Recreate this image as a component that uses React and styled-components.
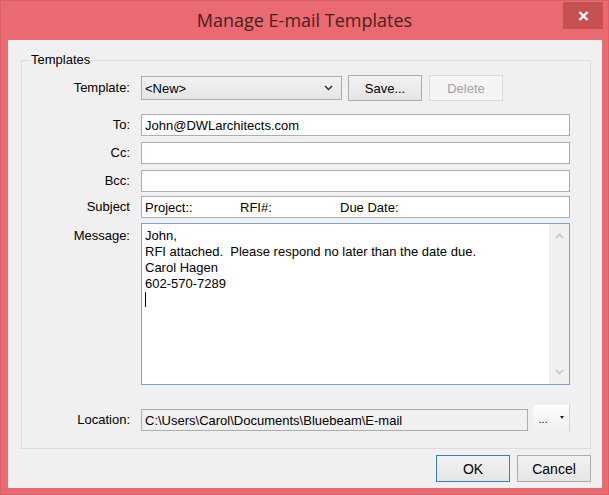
import React from "react";
import styled, { createGlobalStyle } from "styled-components";

const GlobalStyle = createGlobalStyle`
  html, body {
    margin: 0;
    padding: 0;
    background: #e96a71;
  }

  body {
    font-family: "Liberation Sans", Arial, sans-serif;
    font-size: 13px;
    color: #000;
  }
`;

const Window = styled.div`
  width: 609px;
  height: 495px;
  box-sizing: border-box;
  background: #e96a71;
  box-shadow: inset 0 0 0 1px #d8606a;
  display: flex;
  flex-direction: column;
`;

const TitleBar = styled.div`
  height: 40px;
  flex: none;
  display: grid;
  grid-template-columns: 1fr auto 1fr;
`;

const Title = styled.div`
  grid-column: 2;
  align-self: center;
  margin-top: -1px;
  font-family: "Open Sans", "Noto Sans", sans-serif;
  font-size: 18px;
  color: #4a1f23;
  white-space: nowrap;
`;

const CloseButton = styled.div`
  grid-column: 3;
  justify-self: end;
  align-self: start;
  width: 40px;
  height: 27px;
  margin: 2px 6px 0 0;
  background: #c75050;
  display: flex;
  align-items: center;
  justify-content: center;
`;

const Client = styled.div`
  flex: 1;
  margin: 0 7px 7px 8px;
  background: #f0f0f0;
  display: flex;
  flex-direction: column;
`;

const Group = styled.div`
  position: relative;
  margin: 20px 11px 0 13px;
  border: 1px solid #dcdcdc;
  padding: 14px 20px 17px 0;
  display: flex;
  flex-direction: column;
`;

// sits over the group border, like a fieldset legend
const Legend = styled.div`
  position: absolute;
  top: -9px;
  left: 7px;
  padding: 0 2px;
  line-height: 15px;
  background: #f0f0f0;
`;

const Row = styled.div`
  display: grid;
  grid-template-columns: 108px 1fr;
  column-gap: 11px;
  align-items: ${(p) => p.$align || "center"};
  margin-top: ${(p) => p.$top || 0}px;
`;

const Label = styled.div`
  text-align: right;
  white-space: nowrap;
  line-height: 22px;
  padding-top: ${(p) => p.$pad || 0}px;
`;

const Field = styled.div`
  height: 22px;
  box-sizing: border-box;
  border: 1px solid #abadb3;
  background: ${(p) => (p.$readOnly ? "#f0f0f0" : "#fff")};
  padding: 0 3px;
  display: flex;
  align-items: center;
  white-space: nowrap;
  overflow: hidden;
  flex: 1;
`;

const Controls = styled.div`
  display: flex;
  align-items: ${(p) => p.$align || "center"};
  gap: ${(p) => p.$gap || 7}px;
`;

const Combo = styled.div`
  width: 201px;
  height: 24px;
  box-sizing: border-box;
  border: 1px solid #acacac;
  background: linear-gradient(#f2f2f2, #e5e5e5);
  padding: 0 8px 0 3px;
  display: flex;
  align-items: center;
  justify-content: space-between;
`;

const Button = styled.div`
  width: ${(p) => p.$width || 74}px;
  height: ${(p) => p.$height || 26}px;
  box-sizing: border-box;
  border: 1px solid
    ${(p) => (p.$default ? "#3c7fb1" : p.$disabled ? "#d9d9d9" : "#acacac")};
  background: ${(p) =>
    p.$disabled ? "#f4f4f4" : "linear-gradient(#f2f2f2, #e5e5e5)"};
  color: ${(p) => (p.$disabled ? "#a3a3a3" : "#000")};
  font-size: ${(p) => p.$size || 13}px;
  display: flex;
  align-items: center;
  justify-content: center;
  margin-left: ${(p) => p.$left || 0}px;
`;

const SubjectPart = styled.span`
  display: inline-block;
  width: ${(p) => p.$width}px;
`;

const MessageBox = styled.div`
  height: 162px;
  box-sizing: border-box;
  border: 1px solid #7da2ce;
  background: #fff;
  display: grid;
  grid-template-columns: 1fr 20px;
`;

const MessageText = styled.div`
  padding: 4px 3px;
  line-height: 16px;
`;

const Caret = styled.span`
  display: inline-block;
  width: 0;
  height: 15px;
  border-left: 1px solid #000;
  vertical-align: top;
`;

const ScrollBar = styled.div`
  background: #f0f0f0;
  display: flex;
  flex-direction: column;
  justify-content: space-between;
  align-items: center;
  padding: 9px 0 9px;
`;

const MoreButton = styled.div`
  width: 37px;
  height: 26px;
  box-sizing: border-box;
  background: linear-gradient(#fdfdfd, #f0f0f0);
  border-right: 1px solid #d2d2d2;
  display: flex;
  align-items: flex-end;
  justify-content: center;
  gap: 12px;
  padding-bottom: 6px;
  font-size: 11px;
  line-height: 11px;
`;

const Caret3 = styled.span`
  width: 0;
  height: 0;
  border-left: 2.5px solid transparent;
  border-right: 2.5px solid transparent;
  border-top: 3px solid #222;
  margin-bottom: 6px;
`;

const Footer = styled.div`
  display: flex;
  justify-content: flex-end;
  gap: 7px;
  margin: 6px 11px 0 0;
`;

function Chevron({ up, color = "#333", width = 9 }) {
  return (
    <svg width={width} height="6" viewBox="0 0 9 6">
      <path
        d={up ? "M1 5 4.5 1.5 8 5" : "M1 1 4.5 4.5 8 1"}
        fill="none"
        stroke={color}
        strokeWidth="1.5"
      />
    </svg>
  );
}

export default function App() {
  return (
    <>
      <GlobalStyle />
      <Window>
        <TitleBar>
          <Title>Manage E-mail Templates</Title>
          <CloseButton>
            <svg width="11" height="10" viewBox="0 0 11 10">
              <path
                d="M1.5 1 9.5 9M9.5 1 1.5 9"
                stroke="#fff"
                strokeWidth="2.4"
                fill="none"
              />
            </svg>
          </CloseButton>
        </TitleBar>
        <Client>
          <Group>
            <Legend>Templates</Legend>
            <Row>
              <Label>Template:</Label>
              <Controls $gap={6}>
                <Combo>
                  <span>&lt;New&gt;</span>
                  <Chevron />
                </Combo>
                <Button>Save...</Button>
                <Button $disabled $left={1}>
                  Delete
                </Button>
              </Controls>
            </Row>
            <Row $top={13}>
              <Label>To:</Label>
              <Field>John@DWLarchitects.com</Field>
            </Row>
            <Row $top={6}>
              <Label>Cc:</Label>
              <Field />
            </Row>
            <Row $top={6}>
              <Label>Bcc:</Label>
              <Field />
            </Row>
            <Row $top={4}>
              <Label>Subject</Label>
              <Field>
                <SubjectPart $width={95}>Project::</SubjectPart>
                <SubjectPart $width={100}>RFI#:</SubjectPart>
                <span>Due Date:</span>
              </Field>
            </Row>
            <Row $top={5} $align="start">
              <Label $pad={2}>Message:</Label>
              <MessageBox>
                <MessageText>
                  John,
                  <br />
                  RFI attached.&nbsp; Please respond no later than the date due.
                  <br />
                  Carol Hagen
                  <br />
                  602-570-7289
                  <br />
                  <Caret />
                </MessageText>
                <ScrollBar>
                  <Chevron up color="#c4c4c4" />
                  <Chevron color="#c4c4c4" />
                </ScrollBar>
              </MessageBox>
            </Row>
            <Row $top={20} $align="end">
              <Label>Location:</Label>
              <Controls $gap={5} $align="flex-end">
                <Field $readOnly>C:\Users\Carol\Documents\Bluebeam\E-mail</Field>
                <MoreButton>
                  <span>...</span>
                  <Caret3 />
                </MoreButton>
              </Controls>
            </Row>
          </Group>
          <Footer>
            <Button $default $height={27} $size={14}>
              OK
            </Button>
            <Button $height={27} $size={14}>
              Cancel
            </Button>
          </Footer>
        </Client>
      </Window>
    </>
  );
}
